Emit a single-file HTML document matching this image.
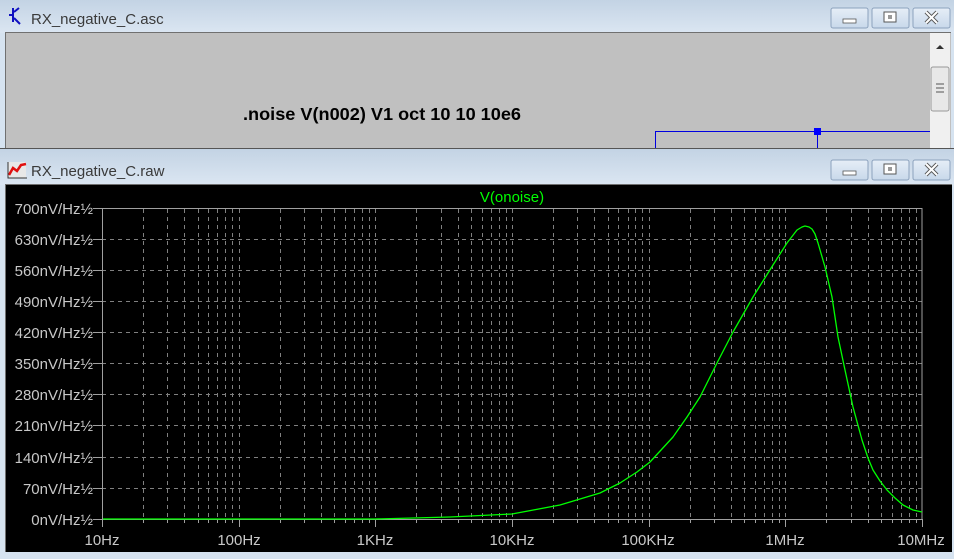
<!DOCTYPE html>
<html><head><meta charset="utf-8"><style>
html,body{margin:0;padding:0;width:954px;height:559px;overflow:hidden;background:#d6e3f0;font-family:"Liberation Sans",Arial,sans-serif}
svg{display:block}
</style></head><body>
<svg width="954" height="559" viewBox="0 0 954 559" xmlns="http://www.w3.org/2000/svg">
<defs>
<linearGradient id="tb" x1="0" y1="0" x2="0" y2="1"><stop offset="0" stop-color="#c3d3e4"/><stop offset="1" stop-color="#dbe6f2"/></linearGradient>
<linearGradient id="bt" x1="0" y1="0" x2="0" y2="1"><stop offset="0" stop-color="#e6eef7"/><stop offset="1" stop-color="#c8d8ea"/></linearGradient>
</defs>
<rect width="954" height="559" fill="#d6e3f0"/>
<rect x="0" y="0" width="954" height="33" fill="url(#tb)"/>
<g stroke="#1010c0" stroke-width="2" fill="none"><path d="M13 8 V22 M13 15 H9 M14 12 L19 8 M14 18 L20 24"/></g>
<text x="31" y="24" font-size="15" fill="#3a3a3a">RX_negative_C.asc</text>
<g>
<rect x="831" y="8" width="37" height="20" rx="2" fill="url(#bt)" stroke="#8ca2bd"/>
<rect x="843" y="19" width="13" height="4" fill="#fff" stroke="#555" stroke-width=".8"/>
<rect x="872" y="8" width="37" height="20" rx="2" fill="url(#bt)" stroke="#8ca2bd"/>
<rect x="884" y="12" width="12" height="10" fill="#fff" stroke="#555"/><rect x="888" y="15" width="4" height="4" fill="#999"/>
<rect x="913" y="8" width="37" height="20" rx="2" fill="url(#bt)" stroke="#8ca2bd"/>
<path d="M926 12 L937 23 M937 12 L926 23" stroke="#555" stroke-width="4"/><path d="M926 12 L937 23 M937 12 L926 23" stroke="#fff" stroke-width="2"/>
</g>
<rect x="5" y="32" width="946" height="117" fill="#c0c0c0"/>
<path d="M5 32.5 H951 M5.5 32 V149" stroke="#707070"/>
<rect x="930" y="33" width="20" height="115" fill="#f0f0f0"/>
<path d="M936 49 L940 45 L944 49 Z" fill="#333"/>
<rect x="931" y="67" width="18" height="44" rx="2" fill="#e8e8e8" stroke="#999"/>
<path d="M936 84 H944 M936 88 H944 M936 92 H944" stroke="#555"/>
<text x="243" y="120" font-size="17.5" font-weight="bold" fill="#000" textLength="278" lengthAdjust="spacingAndGlyphs">.noise V(n002) V1 oct 10 10 10e6</text>
<path d="M655.5 148 V131.5 H930" stroke="#0000e0" fill="none"/>
<path d="M817.5 131 V148" stroke="#0000e0"/>
<rect x="814" y="128" width="7" height="7" fill="#0000ff"/>
<path d="M0 148.5 H954" stroke="#555"/>
<rect x="0" y="149" width="954" height="36" fill="url(#tb)"/>
<rect x="8" y="162" width="18" height="16" fill="#e8e8e8"/>
<path d="M9 175 L13 168 L17 171 L21 165 L26 164" stroke="#e01010" stroke-width="2.5" fill="none"/>
<path d="M8 162 V178 H27" stroke="#333" fill="none"/>
<text x="31" y="176" font-size="15" fill="#3a3a3a">RX_negative_C.raw</text>
<g>
<rect x="831" y="160" width="37" height="20" rx="2" fill="url(#bt)" stroke="#8ca2bd"/>
<rect x="843" y="171" width="13" height="4" fill="#fff" stroke="#555" stroke-width=".8"/>
<rect x="872" y="160" width="37" height="20" rx="2" fill="url(#bt)" stroke="#8ca2bd"/>
<rect x="884" y="164" width="12" height="10" fill="#fff" stroke="#555"/><rect x="888" y="167" width="4" height="4" fill="#999"/>
<rect x="913" y="160" width="37" height="20" rx="2" fill="url(#bt)" stroke="#8ca2bd"/>
<path d="M926 164 L937 175 M937 164 L926 175" stroke="#555" stroke-width="4"/><path d="M926 164 L937 175 M937 164 L926 175" stroke="#fff" stroke-width="2"/>
</g>
<rect x="5" y="184" width="947" height="368" fill="#000"/>
<path d="M5 184.5 H952 M5.5 184 V552" stroke="#707070"/>
<text x="512" y="202" font-size="15" fill="#00ff00" text-anchor="middle">V(onoise)</text>
<g stroke="#808080" stroke-dasharray="4,4" stroke-width="1">
<path d="M102 239.5H922M102 270.5H922M102 301.5H922M102 332.5H922M102 363.5H922M102 394.5H922M102 425.5H922M102 457.5H922M102 488.5H922"/>
</g>
<g stroke="#808080" stroke-dasharray="4,4" id="vg"></g>
<rect x="102.5" y="208.5" width="819.5" height="311" fill="none" stroke="#a0a0a0"/>
<g stroke="#a0a0a0"><path d="M93 208.5H102M93 239.5H102M93 270.5H102M93 301.5H102M93 332.5H102M93 363.5H102M93 394.5H102M93 425.5H102M93 457.5H102M93 488.5H102M93 519.5H102"/></g>
<g id="tk" stroke="#a0a0a0"></g>
<g font-size="15" fill="#c8c8c8" text-anchor="end">
<text x="93" y="214">700nV/Hz½</text><text x="93" y="245">630nV/Hz½</text><text x="93" y="276">560nV/Hz½</text><text x="93" y="307">490nV/Hz½</text><text x="93" y="338">420nV/Hz½</text><text x="93" y="369">350nV/Hz½</text><text x="93" y="400">280nV/Hz½</text><text x="93" y="431">210nV/Hz½</text><text x="93" y="463">140nV/Hz½</text><text x="93" y="494">70nV/Hz½</text><text x="93" y="525">0nV/Hz½</text>
</g>
<g font-size="15" fill="#c8c8c8" text-anchor="middle">
<text x="102" y="545">10Hz</text><text x="239" y="545">100Hz</text><text x="375" y="545">1KHz</text><text x="512" y="545">10KHz</text><text x="648" y="545">100KHz</text><text x="785" y="545">1MHz</text><text x="921" y="545">10MHz</text>
</g>
<polyline fill="none" stroke="#00ff00" stroke-width="1.3" stroke-linejoin="round" points="103,519 375,519 450,517 512,514 560,505 600,493 620,483 637,472 650,462 673,437 687,417 700,397 717,363 733,332 753,297 773,265 787,243 797,230 802,227 805,226 809,227 812,229 815,234 818,243 825,267 832,297 838,337 845,370 853,407 862,440 868,458 873,470 880,481 887,490 895,498 903,505 913,510 922,512"/>
</svg>
<script>
(function(){var ns="http://www.w3.org/2000/svg",vg=document.getElementById("vg"),tk=document.getElementById("tk");
var dec=136.67,d="",t="";
for(var i=0;i<6;i++){for(var k=1;k<=9;k++){var x=Math.round(102+i*dec+Math.log10(k)*dec)+0.5;
if(!(i==0&&k==1))d+="M"+x+" 209V519";
t+="M"+x+" 519V"+(k==1?527:523);}}
t+="M922.5 519V527";
var p=document.createElementNS(ns,"path");p.setAttribute("d",d);vg.appendChild(p);
var q=document.createElementNS(ns,"path");q.setAttribute("d",t);tk.appendChild(q);})();
</script>
</body></html>
